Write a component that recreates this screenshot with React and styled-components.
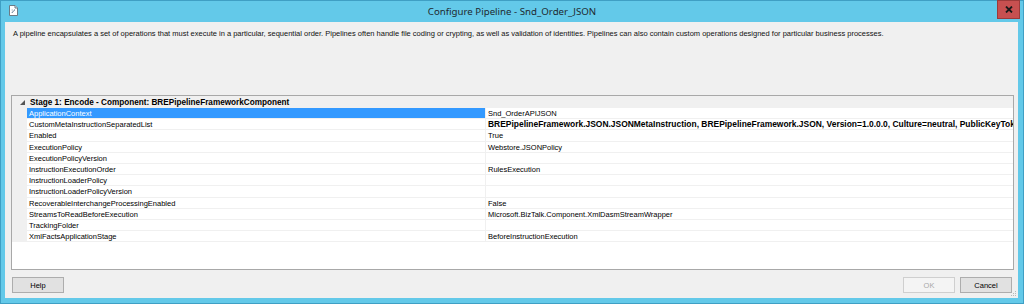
import React from "react";
import styled, { createGlobalStyle } from "styled-components";

const GlobalStyle = createGlobalStyle`
  html, body {
    margin: 0;
    padding: 0;
    background: #63c9e9;
  }
  * {
    box-sizing: border-box;
  }
`;

const Window = styled.div`
  width: 1024px;
  height: 304px;
  background: #63c9e9;
  border: 1px solid #3f9fc4;
  display: flex;
  flex-direction: column;
  font-family: "Liberation Sans", Arial, sans-serif;
  color: #000;
`;

const TitleBar = styled.div`
  height: 21px;
  display: grid;
  grid-template-columns: 1fr auto 1fr;
  align-items: start;
`;

const AppIcon = styled.div`
  padding: 4px 0 0 8px;
  display: flex;
`;

const Title = styled.div`
  font-family: "Noto Sans", "Open Sans", sans-serif;
  font-size: 9.7px;
  color: #1e2a30;
  line-height: 21px;
`;

const CloseButton = styled.div`
  justify-self: end;
  width: 23px;
  height: 19px;
  margin-right: 3px;
  margin-top: -1px;
  background: #c75050;
  border: 1px solid #9c3a3a;
  display: flex;
  align-items: center;
  justify-content: center;
`;

const Client = styled.div`
  flex: 1;
  margin: 0 5px 5px 4px;
  background: #f0f0f0;
  display: flex;
  flex-direction: column;
  position: relative;
`;

const Description = styled.p`
  margin: 0;
  height: 73px;
  padding: 7px 0 0 8px;
  font-size: 7.5px;
  line-height: 9px;
  color: #111;
`;

const Grid = styled.div`
  height: 175px;
  margin: 0 4px 0 6px;
  background: #fff;
  border: 1px solid #a8a8a8;
  display: flex;
  flex-direction: column;
  overflow: hidden;
`;

const StageRow = styled.div`
  height: 12px;
  flex-shrink: 0;
  background: #f0f0f0;
  display: flex;
  align-items: center;
  font-weight: bold;
  font-size: 8.2px;
  white-space: nowrap;
`;

const Expander = styled.div`
  width: 18px;
  display: flex;
  justify-content: center;
  padding-left: 2px;
`;

const Row = styled.div`
  height: 11.2px;
  flex-shrink: 0;
  display: grid;
  grid-template-columns: 15px 459px minmax(0, 1fr);
  font-size: 7.5px;
  white-space: nowrap;
`;

const Margin = styled.div`
  background: #f0f0f0;
`;

const NameCell = styled.div`
  padding-left: 2px;
  line-height: 11px;
  border-bottom: 1px solid #f0f0f0;
  border-right: 1px solid #f0f0f0;
  background: ${(p) => (p.$selected ? "#3399ff" : "#fff")};
  color: ${(p) => (p.$selected ? "#fff" : "#000")};
  overflow: hidden;
`;

const ValueCell = styled.div`
  padding-left: 2px;
  line-height: 11px;
  border-bottom: 1px solid #f0f0f0;
  font-weight: ${(p) => (p.$bold ? "bold" : "normal")};
  font-size: ${(p) => (p.$bold ? "8.45px" : "7.5px")};
  overflow: hidden;
`;

const Footer = styled.div`
  display: flex;
  align-items: center;
  padding: 7px 6px 0 7px;
  gap: 5px;
`;

const Spacer = styled.div`
  flex: 1;
`;

const Button = styled.div`
  width: 52px;
  height: 16px;
  display: flex;
  align-items: center;
  justify-content: center;
  font-size: 7.5px;
  background: ${(p) => (p.$disabled ? "#f4f4f4" : "#e1e1e1")};
  border: 1px solid ${(p) => (p.$disabled ? "#cfcfcf" : "#adadad")};
  color: ${(p) => (p.$disabled ? "#a8a8a8" : "#000")};
`;

const Grip = styled.svg`
  position: absolute;
  right: 1px;
  bottom: 1px;
`;

const rows = [
  ["ApplicationContext", "Snd_OrderAPIJSON", false, true],
  [
    "CustomMetaInstructionSeparatedList",
    "BREPipelineFramework.JSON.JSONMetaInstruction, BREPipelineFramework.JSON, Version=1.0.0.0, Culture=neutral, PublicKeyToken=null",
    true,
  ],
  ["Enabled", "True"],
  ["ExecutionPolicy", "Webstore.JSONPolicy"],
  ["ExecutionPolicyVersion", ""],
  ["InstructionExecutionOrder", "RulesExecution"],
  ["InstructionLoaderPolicy", ""],
  ["InstructionLoaderPolicyVersion", ""],
  ["RecoverableInterchangeProcessingEnabled", "False"],
  ["StreamsToReadBeforeExecution", "Microsoft.BizTalk.Component.XmlDasmStreamWrapper"],
  ["TrackingFolder", ""],
  ["XmlFactsApplicationStage", "BeforeInstructionExecution"],
];

const DocIcon = () => (
  <svg width="9" height="11" viewBox="0 0 9 11">
    <path d="M0.5 0.5 H6 L8.5 3 V10.5 H0.5 Z" fill="#fff" stroke="#6b7b86" />
    <path d="M6 0.5 V3 H8.5" fill="#dfe6ea" stroke="#6b7b86" />
    <path d="M3 8 C3 6 6 6.5 5.5 4.5" fill="none" stroke="#4f6f8a" strokeWidth="0.9" />
    <path d="M2.5 5 H4" stroke="#8aa0b0" strokeWidth="0.7" />
  </svg>
);

const App = () => {
  return (
    <>
      <GlobalStyle />
      <Window>
        <TitleBar>
          <AppIcon>
            <DocIcon />
          </AppIcon>
          <Title>Configure Pipeline - Snd_Order_JSON</Title>
          <CloseButton>
            <svg width="8" height="7" viewBox="0 0 8 7">
              <path d="M1 0.5 L7 6.5 M7 0.5 L1 6.5" stroke="#1a1a1a" strokeWidth="1.8" />
            </svg>
          </CloseButton>
        </TitleBar>
        <Client>
          <Description>
            A pipeline encapsulates a set of operations that must execute in a particular, sequential
            order. Pipelines often handle file coding or crypting, as well as validation of
            identities. Pipelines can also contain custom operations designed for particular business
            processes.
          </Description>
          <Grid>
            <StageRow>
              <Expander>
                <svg width="5" height="5" viewBox="0 0 5 5">
                  <path d="M5 0 V5 H0 Z" fill="#555" />
                </svg>
              </Expander>
              Stage 1: Encode - Component: BREPipelineFrameworkComponent
            </StageRow>
            {rows.map(([name, value, bold, selected]) => (
              <Row key={name}>
                <Margin />
                <NameCell $selected={selected}>{name}</NameCell>
                <ValueCell $bold={bold}>{value}</ValueCell>
              </Row>
            ))}
          </Grid>
          <Footer>
            <Button>Help</Button>
            <Spacer />
            <Button $disabled>OK</Button>
            <Button>Cancel</Button>
          </Footer>
          <Grip width="6" height="6" viewBox="0 0 6 6">
            <rect x="4" y="0" width="1" height="1" fill="#b8b8b8" />
            <rect x="2" y="2" width="1" height="1" fill="#b8b8b8" />
            <rect x="4" y="2" width="1" height="1" fill="#b8b8b8" />
            <rect x="0" y="4" width="1" height="1" fill="#b8b8b8" />
            <rect x="2" y="4" width="1" height="1" fill="#b8b8b8" />
            <rect x="4" y="4" width="1" height="1" fill="#b8b8b8" />
          </Grip>
        </Client>
      </Window>
    </>
  );
};

export default App;
